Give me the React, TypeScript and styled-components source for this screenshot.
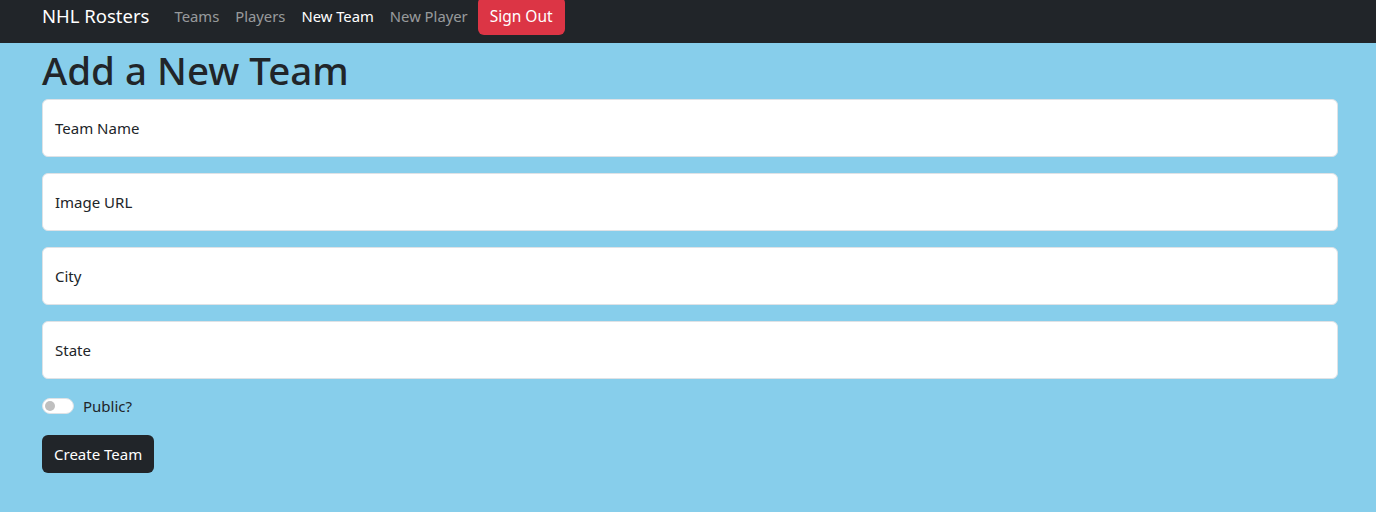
import React from "react";
import styled, { createGlobalStyle } from "styled-components";

const GlobalStyle = createGlobalStyle`
  html, body {
    margin: 0;
    padding: 0;
    background: #87ceeb;
    font-family: "Noto Sans", "Open Sans", Arial, sans-serif;
    color: #212529;
  }
  * { box-sizing: border-box; }
`;

const Navbar = styled.nav`
  background: #212529;
  height: 43px;
  overflow: hidden;
`;

const NavInner = styled.div`
  display: flex;
  align-items: center;
  height: 31px;
  padding-left: 42px;
`;

const Brand = styled.span`
  font-size: 18.5px;
  color: #fff;
  margin-right: 17px;
`;

const NavLink = styled.span<{ $active?: boolean }>`
  font-size: 14.8px;
  padding: 0 8px;
  color: ${(p) => (p.$active ? "#fff" : "rgba(255, 255, 255, 0.55)")};
`;

const SignOut = styled.button`
  height: 38px;
  flex-shrink: 0;
  margin-left: 2px;
  background: #dc3545;
  border: none;
  border-radius: 6px;
  color: #fff;
  font-family: inherit;
  font-size: 15.5px;
  padding: 0 12px;
`;

const Container = styled.main`
  width: 1296px;
  margin-left: 42px;
`;

const Title = styled.h1`
  font-size: 38.5px;
  font-weight: 500;
  line-height: 48px;
  margin: 0 0 5px;
  padding-top: 3px;
`;

const Field = styled.div`
  height: 58px;
  background: #fff;
  border: 1px solid #dee2e6;
  border-radius: 6px;
  display: flex;
  align-items: center;
  padding: 0 12px;
  font-size: 15px;
  margin-bottom: 16px;
`;

const SwitchRow = styled.label`
  display: flex;
  align-items: center;
  gap: 9px;
  font-size: 15px;
  padding-top: 1px;
  margin-bottom: 19px;
`;

const Track = styled.span`
  width: 32px;
  height: 16px;
  border-radius: 8px;
  background: #fff;
  border: 1px solid #dee2e6;
  display: flex;
  align-items: center;
  padding-left: 2px;
`;

const Knob = styled.span`
  width: 10px;
  height: 10px;
  border-radius: 50%;
  background: #bfbfbf;
`;

const SubmitButton = styled.button`
  height: 38px;
  padding: 0 12px;
  border: none;
  border-radius: 6px;
  background: #212529;
  color: #fff;
  font-family: inherit;
  font-size: 15px;
`;

const fields = ["Team Name", "Image URL", "City", "State"];

export default function App() {
  return (
    <>
      <GlobalStyle />
      <Navbar>
        <NavInner>
          <Brand>NHL Rosters</Brand>
          <NavLink>Teams</NavLink>
          <NavLink>Players</NavLink>
          <NavLink $active>New Team</NavLink>
          <NavLink>New Player</NavLink>
          <SignOut>Sign Out</SignOut>
        </NavInner>
      </Navbar>
      <Container>
        <Title>Add a New Team</Title>
        {fields.map((f) => (
          <Field key={f}>{f}</Field>
        ))}
        <SwitchRow>
          <Track>
            <Knob />
          </Track>
          Public?
        </SwitchRow>
        <SubmitButton>Create Team</SubmitButton>
      </Container>
    </>
  );
}
